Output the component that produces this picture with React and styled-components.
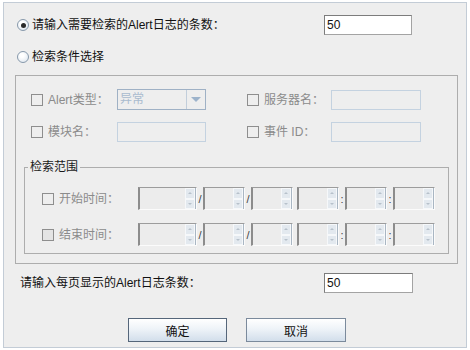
import React from 'react'
import styled, { createGlobalStyle } from 'styled-components'

const GlobalStyle = createGlobalStyle`
  * { box-sizing: border-box; }
  body {
    margin: 0;
    background: #ffffff;
    font-family: "Liberation Sans", "Noto Sans CJK SC", sans-serif;
    font-size: 12px;
    color: #111;
  }
`

const Frame = styled.div`
  margin: 2px 0 0 3px;
  width: 464px;
  height: 346px;
  border: 1px solid #c3ccd6;
  background: #eeeeee;
  display: flex;
  flex-direction: column;
`

const ChoiceRow = styled.div`
  margin-top: ${p => p.$top}px;
  height: 20px;
  padding-left: 13px;
  display: grid;
  grid-template-columns: 307px 88px;
  align-items: center;
`

const Choice = styled.label`
  display: flex;
  align-items: center;
  gap: 3px;
  line-height: 14px;
  white-space: nowrap;
`

const Radio = styled.span`
  width: 12px;
  height: 12px;
  border-radius: 50%;
  border: 1px solid #8799ab;
  background: radial-gradient(circle at 40% 35%, #ffffff 20%, #d9e2ec 100%);
  display: flex;
  align-items: center;
  justify-content: center;
  &::after {
    content: '';
    width: 5px;
    height: 5px;
    border-radius: 50%;
    background: #2a2a2a;
    display: ${p => (p.$on ? 'block' : 'none')};
  }
`

const TextBox = styled.div`
  height: 20px;
  width: ${p => p.$w || 88}px;
  background: ${p => (p.$off ? '#eeeeee' : '#ffffff')};
  border: 1px solid ${p => (p.$off ? '#c4d2e0' : '#a3a3a3')};
  border-top-color: ${p => (p.$off ? '#c4d2e0' : '#7c7c7c')};
  border-left-color: ${p => (p.$off ? '#c4d2e0' : '#7c7c7c')};
  padding-left: 2px;
  line-height: 18px;
  color: #111;
`

const Panel = styled.div`
  margin: 8px 0 0 11px;
  width: 443px;
  height: 189px;
  border: 1px solid #adadad;
  display: flex;
  flex-direction: column;
`

const CondGrid = styled.div`
  margin-top: 13px;
  padding-left: 15px;
  display: grid;
  grid-template-columns: 86px 89px 41px 84px 90px;
  grid-auto-rows: 21px;
  row-gap: 11px;
  align-items: center;
`

const Check = styled.span`
  width: 12px;
  height: 12px;
  border: 1px solid #8e8e8e;
  background: ${p => (p.$light ? '#e4e4e4' : '#eeeeee')};
  flex: none;
`

const CheckLabel = styled.label`
  grid-column: ${p => p.$col};
  display: flex;
  align-items: center;
  gap: 5px;
  color: #8b8b8b;
  line-height: 14px;
  white-space: nowrap;
`

const Combo = styled.div`
  height: 21px;
  border: 1px solid #9fb1c5;
  display: flex;
  color: #a9bbcf;
  line-height: 19px;
`

const ComboText = styled.span`
  flex: 1;
  padding-left: 2px;
`

const ComboArrow = styled.span`
  width: 19px;
  border-left: 1px solid #c2cedb;
  display: flex;
  align-items: center;
  justify-content: center;
  &::after {
    content: '';
    border-left: 5px solid transparent;
    border-right: 5px solid transparent;
    border-top: 5px solid #9db3cb;
  }
`

const Group = styled.fieldset`
  margin: 18px 0 0 8px;
  width: 425px;
  height: 94px;
  border: 1px solid #adadad;
  padding: 13px 0 0 17px;
  min-width: 0;
`

const Legend = styled.legend`
  margin-left: -14px;
  padding: 0 2px;
  line-height: 14px;
  color: #1a1a1a;
`

const TimeRow = styled.div`
  display: flex;
  align-items: center;
  height: 23px;
  margin-bottom: 13px;
`

const TimeLabel = styled.label`
  width: 96px;
  display: flex;
  align-items: center;
  gap: 5px;
  color: #8b8b8b;
  line-height: 14px;
`

const Spin = styled.div`
  width: ${p => p.$w}px;
  height: 23px;
  display: flex;
  border-top: 1px solid #9c9c9c;
  border-left: 2px solid #8c8c8c;
  border-bottom: 1px solid #fbfbfb;
  border-right: 1px solid #fbfbfb;
  background: #ececec;
`

const SpinField = styled.span`
  flex: 1;
`

const SpinButtons = styled.span`
  width: 11px;
  display: flex;
  flex-direction: column;
  border-right: 1px solid #a9b6c3;
`

const SpinButton = styled.span`
  flex: 1;
  background: #e3e9ef;
  border: 1px solid #f6f8fa;
  display: flex;
  align-items: center;
  justify-content: center;
  &::after {
    content: '';
    border-left: 2px solid transparent;
    border-right: 2px solid transparent;
    ${p => (p.$up ? 'border-bottom' : 'border-top')}: 2px solid #b7c1cb;
  }
`

const Sep = styled.span`
  width: ${p => p.$w}px;
  text-align: center;
  color: #444;
  font-size: 11px;
`

const BottomRow = styled.div`
  margin-top: 9px;
  height: 20px;
  padding-left: 16px;
  display: grid;
  grid-template-columns: 304px 89px;
  align-items: center;
  line-height: 14px;
`

const Buttons = styled.div`
  margin: 25px 0 0 124px;
  display: flex;
  gap: 19px;
`

const Button = styled.button`
  width: ${p => p.$w}px;
  height: 24px;
  font: inherit;
  color: #111;
  border: 1px solid ${p => (p.$focus ? '#55667a' : '#7b8a9c')};
  border-radius: 0;
  background: linear-gradient(#ffffff 0%, #eef3f8 45%, #d2deeb 100%);
  padding: 0;
`

function Spinner({ w }) {
  return (
    <Spin $w={w}>
      <SpinField />
      <SpinButtons>
        <SpinButton $up />
        <SpinButton />
      </SpinButtons>
    </Spin>
  )
}

function TimeLine({ label, light }) {
  return (
    <TimeRow>
      <TimeLabel><Check $light={light} />{label}</TimeLabel>
      <Spinner w={59} />
      <Sep $w={6}>/</Sep>
      <Spinner w={42} />
      <Sep $w={6}>/</Sep>
      <Spinner w={42} />
      <Sep $w={4} />
      <Spinner w={42} />
      <Sep $w={6}>:</Sep>
      <Spinner w={42} />
      <Sep $w={6}>:</Sep>
      <Spinner w={42} />
    </TimeRow>
  )
}

export default function App() {
  return (
    <>
      <GlobalStyle />
      <Frame>
        <ChoiceRow $top={12}>
          <Choice><Radio $on />请输入需要检索的Alert日志的条数：</Choice>
          <TextBox>50</TextBox>
        </ChoiceRow>
        <ChoiceRow $top={12}>
          <Choice><Radio />检索条件选择</Choice>
        </ChoiceRow>

        <Panel>
          <CondGrid>
            <CheckLabel $col={1}><Check />Alert类型：</CheckLabel>
            <Combo>
              <ComboText>异常</ComboText>
              <ComboArrow />
            </Combo>
            <CheckLabel $col={4}><Check />服务器名：</CheckLabel>
            <TextBox $off $w={90} />
            <CheckLabel $col={1}><Check />模块名：</CheckLabel>
            <TextBox $off $w={89} />
            <CheckLabel $col={4}><Check />事件 ID：</CheckLabel>
            <TextBox $off $w={90} />
          </CondGrid>

          <Group>
            <Legend>检索范围</Legend>
            <TimeLine label="开始时间：" />
            <TimeLine label="结束时间：" light />
          </Group>
        </Panel>

        <BottomRow>
          <span>请输入每页显示的Alert日志条数：</span>
          <TextBox $w={89}>50</TextBox>
        </BottomRow>

        <Buttons>
          <Button $w={99} $focus>确定</Button>
          <Button $w={100}>取消</Button>
        </Buttons>
      </Frame>
    </>
  )
}
